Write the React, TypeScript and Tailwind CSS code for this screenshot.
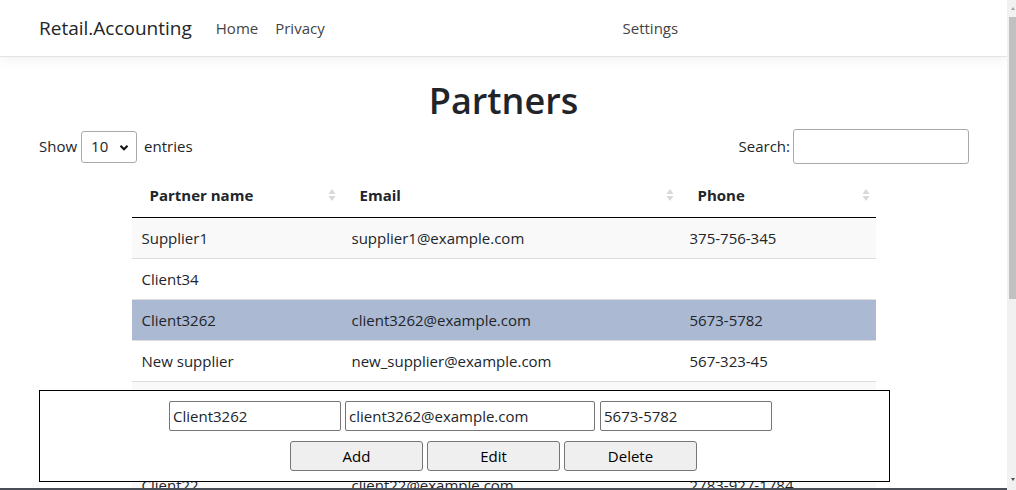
import React from 'react';

interface Partner {
  name: string;
  email: string;
  phone: string;
}

// rows 5 and 6 sit behind the edit panel, so their cells stay blank here
const partners: Partner[] = [
  { name: 'Supplier1', email: 'supplier1@example.com', phone: '375-756-345' },
  { name: 'Client34', email: '', phone: '' },
  { name: 'Client3262', email: 'client3262@example.com', phone: '5673-5782' },
  { name: 'New supplier', email: 'new_supplier@example.com', phone: '567-323-45' },
  { name: '', email: '', phone: '' },
  { name: '', email: '', phone: '' },
  { name: 'Client22', email: 'client22@example.com', phone: '2783-927-1784' },
];

const selectedIndex = 2;

const SortIcon = () => (
  <svg width="8" height="14" viewBox="0 0 8 14" className="shrink-0">
    <path d="M4 1 L7.5 6 L0.5 6 Z" fill="#d9d9d9" />
    <path d="M4 13 L7.5 8 L0.5 8 Z" fill="#d9d9d9" />
  </svg>
);

const App: React.FC = () => {
  return (
    <div
      className="relative flex h-[490px] w-[1016px] overflow-hidden bg-white text-[#212529]"
      style={{ fontFamily: '"Open Sans", "Noto Sans", sans-serif' }}
    >
      <div className="relative flex-1 overflow-hidden">
        {/* Navbar */}
        <nav className="h-[57px] border-b border-[#e3e3e3] bg-white shadow-[0_4px_12px_rgba(0,0,0,0.05)]">
          <div className="flex h-full items-center px-[39px]">
            <span className="mr-[24px] text-[19px] leading-none text-[#212529]">Retail.Accounting</span>
            <span className="mr-[17px] text-[15px] text-[#444]">Home</span>
            <span className="text-[15px] text-[#444]">Privacy</span>
            <div className="flex flex-1 justify-center pl-[8px]">
              <span className="text-[15px] text-[#444]">Settings</span>
            </div>
          </div>
        </nav>

        {/* Content */}
        <main className="px-[39px]">
          <h1 className="mt-[20px] text-center text-[36px] font-semibold leading-[48px] text-[#212529]">
            Partners
          </h1>

          <div className="mt-[4px] flex items-center justify-between">
            <div className="flex items-center text-[15px]">
              <span>Show</span>
              <div className="relative ml-[4px] mr-[7px] flex h-[32px] w-[56px] items-center rounded-[3px] border border-[#aaaaaa] pl-[9px]">
                <span>10</span>
                <svg width="10" height="8" viewBox="0 0 10 8" className="absolute right-[7px] top-[12px]">
                  <path d="M1.5 1.8 L5 5.3 L8.5 1.8" stroke="#111" strokeWidth="2" fill="none" />
                </svg>
              </div>
              <span>entries</span>
            </div>
            <div className="flex items-center text-[15px]">
              <span className="mr-[3px]">Search:</span>
              <div className="mr-[-1px] h-[35px] w-[176px] rounded-[3px] border border-[#aaaaaa]" />
            </div>
          </div>

          <table className="mx-auto mt-[13px] w-[744px] table-fixed border-collapse text-[15px]">
            <colgroup>
              <col className="w-[210px]" />
              <col className="w-[338px]" />
              <col className="w-[196px]" />
            </colgroup>
            <thead>
              <tr className="h-[40px] border-b border-black">
                {['Partner name', 'Email', 'Phone'].map((h) => (
                  <th key={h} className="px-[18px] pb-[4px] text-left font-bold">
                    <div className="flex items-center justify-between">
                      <span>{h}</span>
                      <span className="-mr-[12px]">
                        <SortIcon />
                      </span>
                    </div>
                  </th>
                ))}
              </tr>
            </thead>
            <tbody>
              {partners.map((p, i) => (
                <tr
                  key={i}
                  className={`h-[41px] border-t border-[#dddddd] ${
                    i === selectedIndex ? 'bg-[#abb9d3]' : i % 2 === 0 ? 'bg-[#f9f9f9]' : 'bg-white'
                  }`}
                >
                  <td className="px-[10px] pt-[2px]">{p.name}</td>
                  <td className="px-[10px] pt-[2px]">{p.email}</td>
                  <td className="px-[10px] pt-[2px]">{p.phone}</td>
                </tr>
              ))}
            </tbody>
          </table>
        </main>

        {/* Fixed edit panel */}
        <div className="absolute left-[39px] top-[390px] h-[92px] w-[851px] border border-black bg-white text-[15px]">
          <div className="mt-[10px] flex gap-[4px] pl-[129px]">
            <div className="flex h-[30px] w-[172px] items-center rounded-[2px] border border-[#767676] px-[3px]">Client3262</div>
            <div className="flex h-[30px] w-[250px] items-center rounded-[2px] border border-[#767676] px-[3px]">client3262@example.com</div>
            <div className="ml-[1px] flex h-[30px] w-[172px] items-center rounded-[2px] border border-[#767676] px-[3px]">5673-5782</div>
          </div>
          <div className="mt-[10px] flex gap-[4px] pl-[250px]">
            {['Add', 'Edit', 'Delete'].map((b) => (
              <button
                key={b}
                className="flex h-[30px] w-[133px] items-center justify-center rounded-[3px] border border-[#767676] bg-[#efefef] text-[15px] text-black"
              >
                {b}
              </button>
            ))}
          </div>
        </div>

        <div className="absolute bottom-0 left-0 h-[2px] w-full bg-[#4a4f57]" />
      </div>

      {/* Scrollbar */}
      <div className="relative flex w-[9px] flex-col bg-[#f1f1f1]">
        <svg width="9" height="10" viewBox="0 0 9 10" className="mt-[4px]">
          <path d="M6 3 L8 6 L4 6 Z" fill="#a3a3a3" />
        </svg>
        <div className="ml-[2px] mt-[3px] h-[282px] bg-[#c1c1c1]" />
        <div className="flex-1" />
        <svg width="9" height="10" viewBox="0 0 9 10" className="mb-[6px]">
          <path d="M4 4 L8 4 L6 7 Z" fill="#505050" />
        </svg>
      </div>
    </div>
  );
};

export default App;
